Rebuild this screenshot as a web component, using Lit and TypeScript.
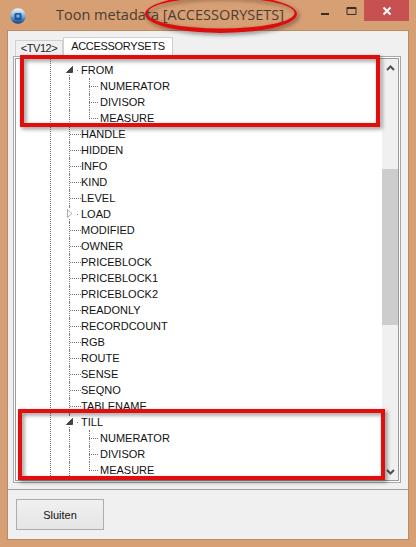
import { LitElement, html, css } from 'lit';
import { customElement } from 'lit/decorators.js';

type Node = { label: string; level: 1 | 2; exp?: 'open' | 'closed'; last?: boolean };

const ROW = (label: string, exp?: 'open' | 'closed'): Node => ({ label, level: 1, exp });
const kids = (): Node[] => [
  { label: 'NUMERATOR', level: 2 },
  { label: 'DIVISOR', level: 2 },
  { label: 'MEASURE', level: 2, last: true },
];

const NODES: Node[] = [
  ROW('FROM', 'open'),
  ...kids(),
  ...['HANDLE', 'HIDDEN', 'INFO', 'KIND', 'LEVEL'].map((l) => ROW(l)),
  ROW('LOAD', 'closed'),
  ...['MODIFIED', 'OWNER', 'PRICEBLOCK', 'PRICEBLOCK1', 'PRICEBLOCK2', 'READONLY', 'RECORDCOUNT', 'RGB', 'ROUTE', 'SENSE', 'SEQNO', 'TABLENAME'].map((l) => ROW(l)),
  ROW('TILL', 'open'),
  ...kids(),
];

@customElement('app-root')
export class AppRoot extends LitElement {
  static styles = css`
    :host {
      display: block;
      width: 416px;
      height: 547px;
    }
    .frame {
      position: relative;
      box-sizing: border-box;
      width: 416px;
      height: 547px;
      overflow: hidden;
      background: #d79f74;
      display: flex;
      flex-direction: column;
      padding: 0 8px 8px;
      font-family: 'Liberation Sans', Arial, sans-serif;
    }
    .titlebar {
      height: 31px;
      flex: none;
      display: flex;
      margin: 0 -8px;
      position: relative;
    }
    .appicon {
      margin: 8px 0 0 10px;
      width: 16px;
      height: 16px;
    }
    .title {
      margin: 5px 0 0 30px;
      font: 14.5px/20px 'Open Sans', sans-serif;
      color: #4c3d32;
      white-space: nowrap;
    }
    .controls {
      margin-left: auto;
      display: flex;
      height: 21px;
      margin-right: 7px;
    }
    .ctl {
      width: 26px;
      display: flex;
      align-items: center;
      justify-content: center;
    }
    .close {
      width: 45px;
      background: #c75050;
    }
    .client {
      flex: 1;
      background: #f0f0f0;
      display: flex;
      flex-direction: column;
      box-shadow: 0 0 0 1px #b98c68;
    }
    .tabs {
      display: flex;
      align-items: flex-end;
      height: 25px;
      flex: none;
      padding-left: 7px;
      font-size: 11px;
      color: #111;
    }
    .tab {
      box-sizing: border-box;
      border: 1px solid #d0d0d0;
      border-bottom: none;
      text-align: center;
    }
    .tab.off {
      width: 48px;
      height: 16px;
      line-height: 15px;
      background: #f0f0f0;
      letter-spacing: -0.4px;
      color: #222;
    }
    .tab.on {
      width: 110px;
      height: 20px;
      line-height: 17px;
      background: #fff;
      letter-spacing: -0.3px;
      margin-bottom: -1px;
      position: relative;
    }
    .panel {
      box-sizing: border-box;
      margin: 0 7px 0 5px;
      height: 427px;
      flex: none;
      border: 1px solid #a8a8a8;
      padding: 1px;
      background: #fff;
    }
    .inner {
      box-sizing: border-box;
      height: 100%;
      border: 1px solid #9a9a9a;
      display: flex;
      overflow: hidden;
    }
    .tree {
      flex: 1;
      position: relative;
      background: #fff;
      font-size: 11px;
      color: #111;
      padding-top: 3px;
      overflow: hidden;
    }
    .guide {
      position: absolute;
      border-left: 1px dotted #777;
      top: 0;
      bottom: 0;
    }
    .guide.outer {
      left: 34px;
    }
    .row {
      position: relative;
      height: 16px;
      line-height: 16px;
      white-space: nowrap;
    }
    .row.l1 {
      padding-left: 65px;
    }
    .row.l2 {
      padding-left: 84px;
    }
    .row.l1::before,
    .row.l2::before {
      content: '';
      position: absolute;
      left: 53px;
      top: 0;
      bottom: 0;
      border-left: 1px dotted #777;
    }
    .row.first::before {
      top: 8px;
    }
    .tick {
      position: absolute;
      top: 8px;
      width: 11px;
      border-top: 1px dotted #777;
    }
    .l1 .tick {
      left: 54px;
    }
    .l2 .tick {
      left: 73px;
      width: 9px;
    }
    .l2 .vert {
      position: absolute;
      left: 73px;
      top: 0;
      bottom: 0;
      border-left: 1px dotted #777;
    }
    .l2 .vert.end {
      bottom: 7px;
    }
    .exp {
      position: absolute;
      left: 49px;
      top: 3px;
      width: 9px;
      height: 9px;
      background: #fff;
    }
    .dot {
      position: absolute;
      left: 61px;
      top: 8px;
      width: 1px;
      height: 1px;
      background: #777;
    }
    .scroll {
      width: 16px;
      flex: none;
      background: #f0f0f0;
      display: flex;
      flex-direction: column;
    }
    .arrow {
      height: 17px;
      flex: none;
      display: flex;
      align-items: center;
      justify-content: center;
    }
    .track {
      flex: 1;
      padding-top: 93px;
    }
    .thumb {
      height: 156px;
      background: #cdcdcd;
    }
    .footer {
      flex: 1;
      margin-top: 6px;
      border-top: 1px solid #a0a0a0;
      padding: 9px 0 0 8px;
    }
    button {
      box-sizing: border-box;
      display: block;
      width: 88px;
      height: 31px;
      border: 1px solid #adadad;
      background: linear-gradient(#f0f0f0, #e5e5e5);
      font: 11px 'Liberation Sans', Arial, sans-serif;
      color: #111;
      padding: 0;
    }
    .marks {
      position: absolute;
      inset: 0;
      pointer-events: none;
    }
  `;

  private renderRow(n: Node, i: number) {
    const first = n.exp === 'open' && i === 0;
    const cls = `row l${n.level}${first ? ' first' : ''}`;
    if (n.level === 2) {
      return html`<div class=${cls}>
        <span class="vert ${n.last ? 'end' : ''}"></span><span class="tick"></span>${n.label}
      </div>`;
    }
    return html`<div class=${cls}>
      ${n.exp
        ? html`<svg class="exp" viewBox="0 0 9 9">
              <path
                d=${n.exp === 'open' ? 'M7.5 1.5v6h-6z' : 'M2.5 .5l4.5 4-4.5 4z'}
                fill=${n.exp === 'open' ? '#444' : '#fff'}
                stroke=${n.exp === 'open' ? '#444' : '#aaa'}
              /></svg
            ><span class="dot"></span>`
        : html`<span class="tick"></span>`}
      ${n.label}
    </div>`;
  }

  render() {
    return html`
      <div class="frame">
        <div class="titlebar">
          <svg class="appicon" viewBox="0 0 16 16">
            <defs>
              <linearGradient id="orb" x1="0" y1="0" x2="0" y2="1">
                <stop offset="0" stop-color="#f4f8fc" />
                <stop offset="0.45" stop-color="#8db7dd" />
                <stop offset="1" stop-color="#0f3f78" />
              </linearGradient>
            </defs>
            <circle cx="8" cy="8" r="7.8" fill="url(#orb)" />
            <rect x="4.500" y="5" width="7" height="7" rx="1.500" fill="#14569f" />
            <rect x="6.500" y="6.500" width="3" height="3" fill="#7fb2e3" />
          </svg>
          <div class="title">Toon metadata [ACCESSORYSETS]</div>
          <div class="controls">
            <div class="ctl">
              <svg width="10" height="10" viewBox="0 0 10 10"><rect x="1" y="7" width="8" height="2" fill="#3a2d22" /></svg>
            </div>
            <div class="ctl">
              <svg width="11" height="10" viewBox="0 0 11 10"><path d="M1 1.500h9v7H1z" fill="none" stroke="#3a2d22" /><rect x="1" y="1" width="9" height="2" fill="#3a2d22" /></svg>
            </div>
            <div class="ctl close">
              <svg width="10" height="10" viewBox="0 0 10 10"><path d="M1.500 1.500l7 7M8.500 1.500l-7 7" stroke="#fff" stroke-width="2" /></svg>
            </div>
          </div>
        </div>
        <div class="client">
          <div class="tabs">
            <div class="tab off">&lt;TV12&gt;</div>
            <div class="tab on">ACCESSORYSETS</div>
          </div>
          <div class="panel">
            <div class="inner">
              <div class="tree">
                <span class="guide outer"></span>
                ${NODES.map((n, i) => this.renderRow(n, i))}
              </div>
              <div class="scroll">
                <div class="arrow">
                  <svg width="9" height="6" viewBox="0 0 9 6"><path d="M1 5l3.500-3.500L8 5" fill="none" stroke="#505050" stroke-width="2" /></svg>
                </div>
                <div class="track"><div class="thumb"></div></div>
                <div class="arrow">
                  <svg width="9" height="6" viewBox="0 0 9 6"><path d="M1 1l3.500 3.500L8 1" fill="none" stroke="#505050" stroke-width="2" /></svg>
                </div>
              </div>
            </div>
          </div>
          <div class="footer"><button>Sluiten</button></div>
        </div>
        <svg class="marks" width="416" height="547" viewBox="0 0 416 547">
          <defs>
            <filter id="sh" x="-10%" y="-10%" width="120%" height="130%">
              <feDropShadow dx="2" dy="2" stdDeviation="2" flood-color="#000" flood-opacity="0.45" />
            </filter>
          </defs>
          <path
            fill-rule="evenodd"
            fill="#dc1010"
            filter="url(#sh)"
            d="M145 14a76 19 0 1 0 152 0a76 19 0 1 0 -152 0z M147.500 13a73.500 15.500 0 1 0 147 0a73.500 15.500 0 1 0 -147 0z"
          />
          <rect x="22" y="57" width="356" height="68" fill="none" stroke="#e20f0f" stroke-width="4" filter="url(#sh)" />
          <rect x="20" y="411" width="363" height="67" fill="none" stroke="#e20f0f" stroke-width="4" filter="url(#sh)" />
        </svg>
      </div>
    `;
  }
}
